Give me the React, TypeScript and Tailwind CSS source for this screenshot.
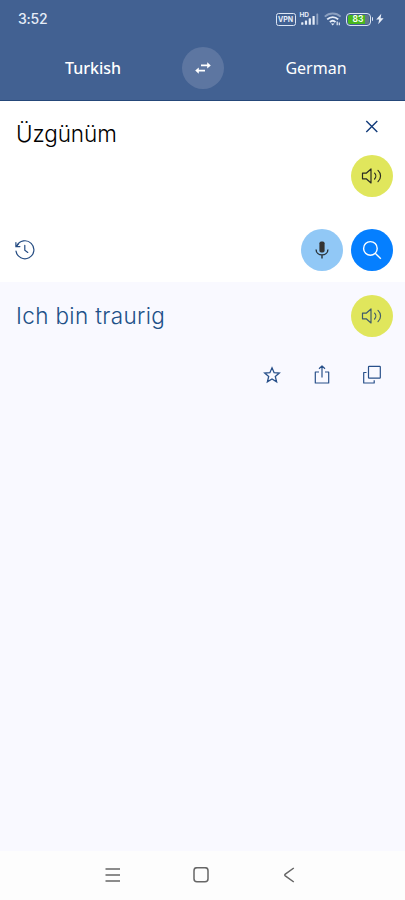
import React from "react";

type IconProps = { className?: string };

function SpeakerIcon({ className }: IconProps) {
  return (
    <svg width="22" height="18" viewBox="0 0 22 18" fill="none" stroke="currentColor" strokeWidth="1.2" className={className}>
      <path d="M1.5 6.2H5.2L10 2V16L5.2 11.8H1.5Z" strokeLinejoin="round" />
      <path d="M13.6 6.2C15.2 7.8 15.2 10.4 13.6 12" strokeLinecap="round" />
      <path d="M17 3.4C20.4 6.4 20.4 11.6 17 14.6" strokeLinecap="round" />
    </svg>
  );
}

function StatusBar() {
  return (
    <div className="flex h-[38px] items-center justify-between pr-[21px] pl-[18px] text-[#e6edf8]">
      <span className="font-['Inter',sans-serif] text-[14px] leading-[38px] font-medium tracking-[-0.2px]">
        3:52
      </span>
      <div className="flex h-[38px] items-center">
        {/* VPN */}
        <div className="flex h-[13px] w-[20px] items-center justify-center rounded-[2.5px] border-[1.5px] border-[#dbe5f4] font-['Inter',sans-serif] text-[7px] leading-none font-bold">
          VPN
        </div>
        {/* Signal */}
        <div className="relative ml-[4px] h-[14px] w-[19px]">
          <span className="absolute top-0 left-0 font-['Inter',sans-serif] text-[6.5px] leading-[6px] font-bold">
            HD
          </span>
          <svg width="19" height="14" viewBox="0 0 19 14" fill="currentColor">
            <rect x="1.2" y="10.2" width="2.2" height="2.6" rx=".6" />
            <rect x="4.9" y="8.5" width="2.2" height="4.3" rx=".6" />
            <rect x="8.7" y="6.3" width="2.2" height="6.5" rx=".6" />
            <rect x="12.5" y="4" width="2.2" height="8.8" rx=".6" />
            <rect x="16.4" y="1.5" width="1.8" height="11.3" rx=".6" opacity=".45" />
          </svg>
        </div>
        {/* Wi-Fi */}
        <svg width="18" height="14" viewBox="0 0 18 14" fill="none" stroke="currentColor" strokeWidth="1.9" className="ml-[5px]">
          <path d="M.8 4.6C5.3.4 12.1.4 16.6 4.6" opacity=".45" />
          <path d="M3.2 7.4C6.4 4.4 11 4.4 14.2 7.4" />
          <path d="M5.9 10.1C7.6 8.5 9.8 8.5 11.5 10.1" />
          <path d="M6.9 11.4H10.5L8.7 13.5Z" fill="currentColor" stroke="none" />
          <path d="M13.2 9.6V13.2M15.3 10.4V13.2" strokeWidth="1.2" />
        </svg>
        {/* Battery */}
        <div className="ml-[4px] flex items-center">
          <div className="flex h-[13px] w-[25px] items-center rounded-[4px] border-[1.5px] border-[#dbe5f4] p-[1px]">
            <div className="flex h-[9px] w-full items-center justify-center rounded-[1.5px] bg-linear-to-r from-[#49b81e] from-80% to-[#60788a] to-80% font-['Inter',sans-serif] text-[8.5px] leading-none font-semibold text-white">
              83
            </div>
          </div>
          <div className="ml-px h-[4px] w-[1.5px] rounded-r bg-[#dbe5f4]" />
        </div>
        <svg width="8" height="12" viewBox="0 0 8 12" fill="currentColor" className="ml-[3px]">
          <path d="M5.3.8L.2 6.6H3.2L2.2 11.2L7.6 5.2H4.6Z" />
        </svg>
      </div>
    </div>
  );
}

function LanguageBar() {
  return (
    <div className="flex h-[62px] items-center pb-[2px] font-['Noto_Sans',sans-serif] text-[16px] text-white">
      <span className="w-[182px] pl-[4px] text-center font-medium">Turkish</span>
      <button className="flex size-[42px] items-center justify-center rounded-full bg-[#5d76a1]">
        <svg width="16" height="14" viewBox="0 0 16 14" fill="currentColor">
          <path d="M6 3.5H12.2V1.2L15.8 4.4L12.2 7.6V5.2H6ZM10 8.7H3.8V6.4L.2 9.6L3.8 12.8V10.4H10Z" />
        </svg>
      </button>
      <span className="flex-1 pl-[3px] text-center">German</span>
    </div>
  );
}

function SourcePanel() {
  return (
    <section className="flex h-[181px] flex-col justify-between bg-white pb-[11px]">
      <div className="flex justify-between pr-[12px] pl-[16px]">
        <p className="pt-[16px] font-['Inter',sans-serif] text-[22.5px] leading-[34px] font-light tracking-[-0.1px] text-black">
          Üzgünüm
        </p>
        <div className="flex w-[42px] flex-col items-center pt-[19px]">
          <svg width="14" height="13" viewBox="0 0 14 13" fill="none" stroke="#123b7a" strokeWidth="1.4">
            <path d="M1.3 1L12.3 12M12.3 1L1.3 12" />
          </svg>
          <button className="mt-[22px] flex size-[42px] items-center justify-center rounded-full bg-[#e0e65c] text-[#292b22]">
            <SpeakerIcon />
          </button>
        </div>
      </div>

      <div className="flex items-center pr-[12px] pl-[14px]">
        <svg width="21" height="20" viewBox="0 0 21 20" fill="none" stroke="#254c82" strokeWidth="1.2" strokeLinecap="round">
          <path d="M2.8 5.8A9 9 0 1 1 2 11.2" />
          <path d="M1.9 2.6V6.6H5.9M2.2 6.3L4.6 3.9" />
          <path d="M10.8 5.3V10.2L13.8 12.4" />
        </svg>
        <button className="ml-auto flex size-[42px] items-center justify-center rounded-full bg-[#91c8f6]">
          <svg width="14" height="18" viewBox="0 0 14 18" fill="none">
            <rect x="4.4" y=".5" width="5.2" height="11" rx="1.8" fill="#333" />
            <path d="M1.1 8.5C1.1 15.7 12.9 15.7 12.9 8.5M7 13.7V17.4" stroke="#29333a" strokeWidth="1.4" />
          </svg>
        </button>
        <button className="ml-[8px] flex size-[42px] items-center justify-center rounded-full bg-[#057fff]">
          <svg width="20" height="20" viewBox="0 0 20 20" fill="none" stroke="white" strokeWidth="1.4">
            <circle cx="8.4" cy="8.4" r="6.8" />
            <path d="M13.2 13.2L18.8 18.8" />
          </svg>
        </button>
      </div>
    </section>
  );
}

function ResultPanel() {
  return (
    <section className="flex-1 bg-[#f9f9ff] pr-[12px] pl-[16px] text-[#28508a]">
      <div className="flex justify-between pt-[13px]">
        <p className="pt-[4px] font-['Inter',sans-serif] text-[22.5px] leading-[34px] font-[350] tracking-[0.35px] text-[#205087]">
          Ich bin traurig
        </p>
        <button className="flex size-[42px] items-center justify-center rounded-full bg-[#e0e65c] text-[#405c6b]">
          <SpeakerIcon />
        </button>
      </div>
      <div className="mt-[28px] flex justify-end gap-[30px] pr-[11px]">
        <svg width="20" height="20" viewBox="0 0 20 20" fill="none" stroke="currentColor" strokeWidth="1.3">
          <path d="M10 2.8L12.1 7.7L17.3 8.1L13.3 11.5L14.6 16.8L10 13.9L5.4 16.8L6.7 11.5L2.7 8.1L7.9 7.7Z" />
        </svg>
        <svg width="20" height="20" viewBox="0 0 20 20" fill="none" stroke="currentColor" strokeWidth="1.2">
          <path d="M7 7H3.3V18H16.7V7H13M10 12.5V1M7 3.8L10 .9L13 3.8" strokeLinejoin="round" />
        </svg>
        <svg width="20" height="20" viewBox="0 0 20 20" fill="none" stroke="currentColor" strokeWidth="1.2">
          <rect x="6.5" y="1.4" width="11.8" height="11.8" rx=".6" />
          <path d="M4.5 7.5H1.7V18H12.2V15.3" strokeLinejoin="round" />
        </svg>
      </div>
    </section>
  );
}

function NavigationBar() {
  return (
    <nav className="flex h-[49px] items-center justify-between bg-[#fdfdfd] pr-[110px] pb-[2px] pl-[105px] text-[#666]">
      <svg width="16" height="16" viewBox="0 0 16 16" stroke="currentColor" strokeWidth="1.5">
        <path d="M.5 2H15M.5 8H15M.5 14H15" />
      </svg>
      <svg width="16" height="16" viewBox="0 0 16 16" fill="none" stroke="currentColor" strokeWidth="1.5" className="-ml-[2px]">
        <rect x="1" y=".7" width="14" height="14" rx="3" />
      </svg>
      <svg width="12" height="16" viewBox="0 0 12 16" fill="none" stroke="currentColor" strokeWidth="1.5">
        <path d="M10.8 1L2.3 7.1Q1.2 8 2.3 8.9L10.8 15" />
      </svg>
    </nav>
  );
}

export default function App() {
  return (
    <main className="flex h-[900px] w-[405px] flex-col overflow-hidden">
      <header className="h-[101px] border-b border-[#254879] bg-[#426192]">
        <StatusBar />
        <LanguageBar />
      </header>
      <SourcePanel />
      <ResultPanel />
      <NavigationBar />
    </main>
  );
}
